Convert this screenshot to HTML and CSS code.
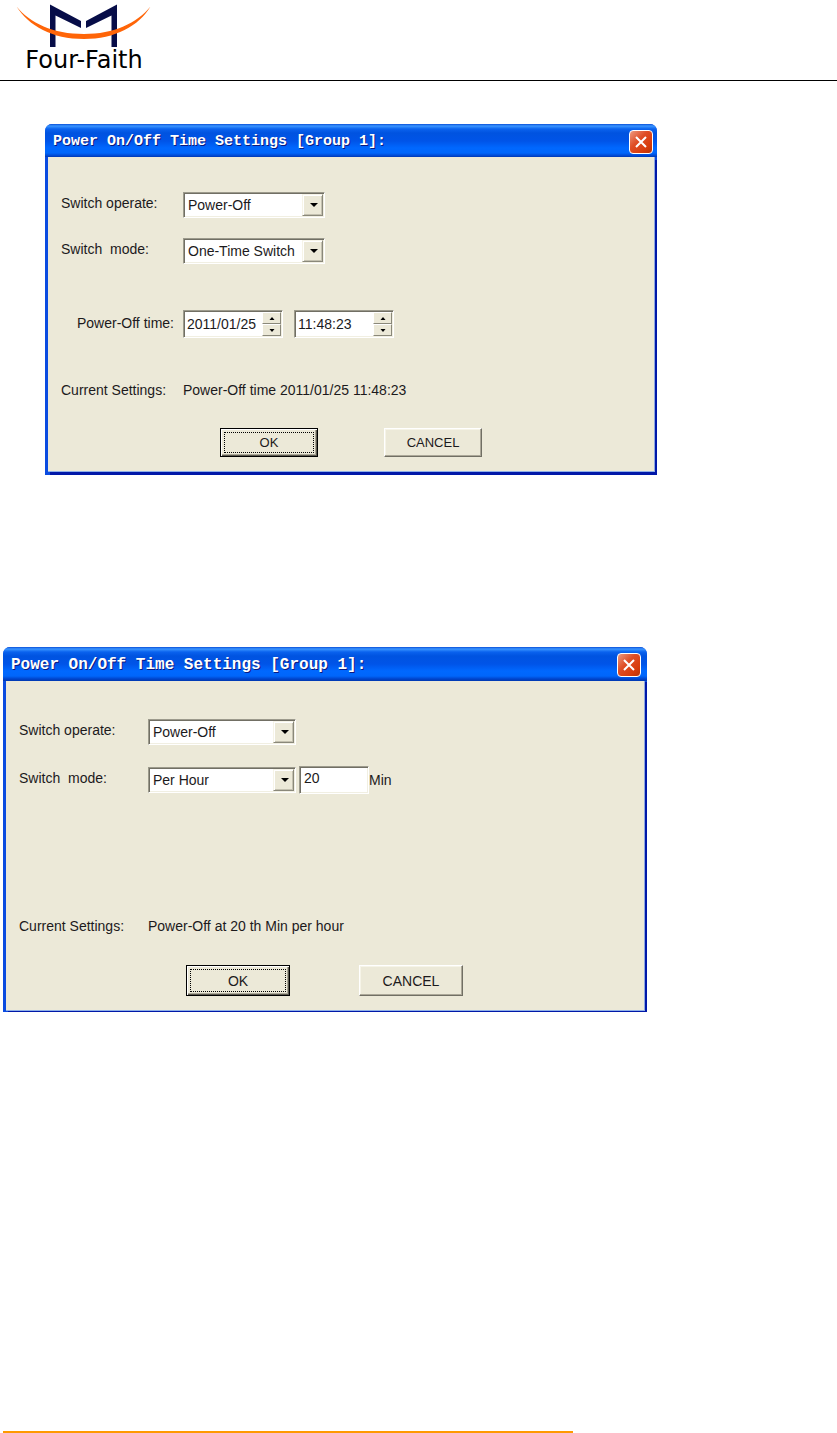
FILE: index.html
```html
<!DOCTYPE html>
<html lang="en">
<head>
<meta charset="utf-8">
<meta name="viewport" content="width=device-width, initial-scale=1">
<title>Four-Faith - Power On/Off Time Settings</title>
<link rel="stylesheet" href="styles.css">
</head>
<body class="page">
<header class="masthead">
  <div class="brand">
    <svg class="brand-mark" viewBox="16 4 136 44" aria-hidden="true">
      <path fill="#070d48" d="M50 4.500L81 21V28L55.500 15.500V47H50ZM117 4.500L86 21V28L111.500 15.500V47H117Z"/>
      <path fill="#ff6508" d="M16.500 6.500C30 23 53 34 84 34C114 34 137 23 150.500 6.500C139 26 115 39 84 39C52 39 29 26 16.500 6.500Z"/>
    </svg>
    <span class="brand-name">Four-Faith</span>
  </div>
</header>

<main class="content">
  <section class="dialog dialog-once" aria-labelledby="title-once">
    <div class="titlebar">
      <h2 class="title" id="title-once">Power On/Off Time Settings [Group 1]:</h2>
      <button class="close" type="button" aria-label="Close"><svg class="close-icon" viewBox="0 0 14 14" aria-hidden="true"><path d="M2 2L12 12M12 2L2 12"/></svg></button>
    </div>
    <form class="form">
      <div class="row">
        <label class="label" for="operate-once">Switch operate:</label>
        <span class="combo"><select class="select" id="operate-once"><option>Power-Off</option><option>Power-On</option></select></span>
      </div>
      <div class="row">
        <label class="label" for="mode-once">Switch&nbsp; mode:</label>
        <span class="combo"><select class="select" id="mode-once"><option>One-Time Switch</option><option>Per Hour</option></select></span>
      </div>
      <div class="row row-time">
        <label class="label label-indent" for="date-once">Power-Off time:</label>
        <div class="times">
          <span class="spinner">
            <input class="spin-input" id="date-once" type="text" value="2011/01/25">
            <span class="spin-buttons">
              <button class="spin" type="button" aria-label="Date up"><svg class="spin-icon" viewBox="0 0 6 3" aria-hidden="true"><path d="M3 0L5.500 3H0.500Z"/></svg></button>
              <button class="spin" type="button" aria-label="Date down"><svg class="spin-icon" viewBox="0 0 6 3" aria-hidden="true"><path d="M0.500 0H5.500L3 3Z"/></svg></button>
            </span>
          </span>
          <span class="spinner">
            <input class="spin-input" type="text" value="11:48:23" aria-label="Power-off clock time">
            <span class="spin-buttons">
              <button class="spin" type="button" aria-label="Time up"><svg class="spin-icon" viewBox="0 0 6 3" aria-hidden="true"><path d="M3 0L5.500 3H0.500Z"/></svg></button>
              <button class="spin" type="button" aria-label="Time down"><svg class="spin-icon" viewBox="0 0 6 3" aria-hidden="true"><path d="M0.500 0H5.500L3 3Z"/></svg></button>
            </span>
          </span>
        </div>
      </div>
      <div class="row row-status">
        <span class="label">Current Settings:</span>
        <output class="status">Power-Off time 2011/01/25 11:48:23</output>
      </div>
      <div class="actions">
        <button class="button button-default" type="button">OK</button>
        <button class="button" type="button">CANCEL</button>
      </div>
    </form>
  </section>

  <section class="dialog dialog-hourly" aria-labelledby="title-hourly">
    <div class="titlebar">
      <h2 class="title" id="title-hourly">Power On/Off Time Settings [Group 1]:</h2>
      <button class="close" type="button" aria-label="Close"><svg class="close-icon" viewBox="0 0 14 14" aria-hidden="true"><path d="M2 2L12 12M12 2L2 12"/></svg></button>
    </div>
    <form class="form">
      <div class="row">
        <label class="label" for="operate-hourly">Switch operate:</label>
        <span class="combo"><select class="select" id="operate-hourly"><option>Power-Off</option><option>Power-On</option></select></span>
      </div>
      <div class="row">
        <label class="label" for="mode-hourly">Switch&nbsp; mode:</label>
        <div class="interval">
          <span class="combo"><select class="select" id="mode-hourly"><option>Per Hour</option><option>One-Time Switch</option></select></span>
          <input class="minutes" id="minutes" type="text" value="20">
          <label class="unit" for="minutes">Min</label>
        </div>
      </div>
      <div class="row row-status">
        <span class="label">Current Settings:</span>
        <output class="status">Power-Off at 20 th Min per hour</output>
      </div>
      <div class="actions">
        <button class="button button-default" type="button">OK</button>
        <button class="button" type="button">CANCEL</button>
      </div>
    </form>
  </section>
</main>

<footer class="footer"><hr class="footer-rule"></footer>
</body>
</html>
```

FILE: styles.css
```css
* {
  box-sizing: border-box;
}

.page {
  display: flex;
  flex-direction: column;
  min-height: 100vh;
  margin: 0;
  background: #fff;
  color: #1c1a1c;
  font: 14px/18px "Liberation Sans", Arial, sans-serif;
}

.masthead {
  padding: 4px 16px 8px;
  border-bottom: 1px solid #000;
}

.brand {
  display: flex;
  flex-direction: column;
  align-items: center;
  width: 136px;
}

.brand-mark {
  display: block;
  width: 136px;
  height: 44px;
}

.brand-name {
  color: #000;
  font: 24px/24px "DejaVu Sans", Verdana, sans-serif;
}

.content {
  padding: 43px 3px 40px;
}

.dialog {
  overflow: hidden;
  border-radius: 7px 7px 0 0;
  background: #0a4be0;
}

.dialog-once {
  max-width: 612px;
  margin: 0 0 172px 42px;
}

.dialog-hourly {
  max-width: 644px;
}

.titlebar {
  display: flex;
  align-items: center;
  justify-content: space-between;
  height: 33px;
  padding: 2px 4px 0 8px;
  background: linear-gradient(#0a50d8 0, #3a95ff 2px, #0a62ee 5px, #0053e0 9px, #0054e8 17px, #0068ff 24px, #0066fb 29px, #0044cc 32px, #0038b0);
}

.title {
  margin: 0;
  color: #fff;
  font: bold 15px/20px "Liberation Mono", "Courier New", monospace;
  text-shadow: 1px 1px #0a1a80;
  white-space: nowrap;
}

.close {
  display: grid;
  place-items: center;
  width: 24px;
  height: 24px;
  padding: 0;
  border: 1px solid #fff;
  border-radius: 4px;
  background: linear-gradient(135deg, #ee9a80, #df4e26 40%, #d83c0c 75%, #b83408);
}

.close-icon {
  width: 14px;
  height: 14px;
  fill: none;
  stroke: #fff;
  stroke-width: 2;
}

.form {
  display: flex;
  flex-direction: column;
  gap: 20px;
  margin: 0 2px 3px 3px;
  padding: 35px 13px 14px;
  border-right: 1px solid #8fa8e0;
  border-bottom: 1px solid #8fb0e8;
  background: #ece9d8;
  box-shadow: 2px 3px #0018a8;
}

.row {
  display: grid;
  grid-template-columns: 122px 1fr;
  align-items: center;
}

.label {
  padding-bottom: 4px;
  white-space: nowrap;
}

.label-indent {
  padding: 0 0 2px 16px;
}

.row-time {
  margin-top: 26px;
}

.row-status {
  margin-top: 23px;
}

.status {
  padding-bottom: 4px;
}

.combo {
  position: relative;
  display: block;
  width: 142px;
}

.select,
.minutes,
.spinner {
  border: 1px solid;
  border-color: #9c9a8c #fff #fff #9c9a8c;
  border-radius: 0;
  background: #fff;
  box-shadow: inset 1px 1px #716f64, inset -1px -1px #f1efe2;
  color: #1c1a1c;
  font: inherit;
}

.select {
  display: block;
  width: 100%;
  height: 26px;
  padding: 0 20px 0 4px;
  appearance: none;
}

.combo::before,
.combo::after {
  position: absolute;
  content: "";
  pointer-events: none;
}

.combo::before {
  top: 2px;
  right: 2px;
  bottom: 2px;
  width: 19px;
  border: 1px solid;
  border-color: #f6f4e8 #8a887a #8a887a #f6f4e8;
  background: #ece9d8;
  box-shadow: inset 1px 1px #fff, inset -1px -1px #c4c1b0;
}

.combo::after {
  top: 11px;
  right: 7px;
  border: 4px solid transparent;
  border-top-color: #000;
  border-bottom: 0;
}

.times {
  display: flex;
  gap: 11px;
}

.spinner {
  display: flex;
  width: 100px;
  height: 28px;
  padding: 1px;
}

.spin-input {
  flex: 1;
  min-width: 0;
  padding: 0 0 0 2px;
  border: 0;
  background: transparent;
  color: inherit;
  font: inherit;
}

.spin-buttons {
  display: flex;
  flex-direction: column;
  width: 19px;
}

.spin {
  display: grid;
  flex: 1;
  place-items: center;
  padding: 0;
  border: 1px solid;
  border-color: #fff #8a887a #8a887a #fff;
  background: #ece9d8;
}

.spin-icon {
  width: 6px;
  height: 3px;
}

.actions {
  display: flex;
  gap: 66px;
  padding: 5px 0 0 159px;
}

.button {
  width: 98px;
  height: 29px;
  padding: 0;
  border: 1px solid;
  border-color: #fff #716f64 #716f64 #fff;
  border-radius: 0;
  background: #ece9d8;
  box-shadow: inset -1px -1px #aca899, inset 1px 1px #f6f4e8;
  color: #1c1a1c;
  font: 13px/18px "Liberation Sans", Arial, sans-serif;
}

.button-default {
  border-color: #000;
  outline: 1px dotted #000;
  outline-offset: -5px;
  box-shadow: inset 1px 1px #fff, inset -1px -1px #5c5a50, inset -2px -2px #aca899;
}

.interval {
  display: flex;
  align-items: center;
}

.minutes {
  width: 70px;
  height: 28px;
  margin: -1px 0 -1px 3px;
  padding: 0 4px 4px;
}

.dialog-hourly .titlebar {
  height: 34px;
  padding-right: 6px;
}

.dialog-hourly .title {
  font-size: 16px;
}

.dialog-hourly .form {
  gap: 22px;
  margin-bottom: 1px;
  padding: 38px 13px 14px;
  box-shadow: 2px 1px #0018a8;
}

.dialog-hourly .row {
  grid-template-columns: 129px 1fr;
}

.dialog-hourly .combo {
  width: 148px;
}

.dialog-hourly .row-status {
  margin-top: 102px;
}

.dialog-hourly .actions {
  gap: 69px;
  padding: 4px 0 0 167px;
}

.dialog-hourly .button {
  width: 104px;
  height: 31px;
  font-size: 14px;
}

.footer {
  margin-top: auto;
  padding: 0 3px;
}

.footer-rule {
  max-width: 570px;
  height: 2px;
  margin: 0;
  border: 0;
  background: #ff9900;
}
```
